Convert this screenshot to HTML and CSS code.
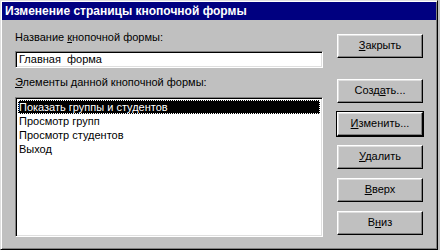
FILE: index.html
```html
<!DOCTYPE html>
<html lang="ru">
<head>
  <meta charset="UTF-8" />
  <title>Изменение страницы кнопочной формы</title>
  <link rel="stylesheet" href="styles.css">
</head>
<body>

  <div class="window">
    <div class="title-bar">Изменение страницы кнопочной формы</div>

    <div class="content">
      <div class="left">
        <div class="label">Название <u>к</u>нопочной формы:</div>
        <div class="textbox">Главная&nbsp; форма</div>

        <div class="label list-label"><u>Э</u>лементы данной кнопочной формы:</div>
        <div class="listbox">
          <div class="item selected">Показать группы и студентов</div>
          <div class="item">Просмотр групп</div>
          <div class="item">Просмотр студентов</div>
          <div class="item">Выход</div>
        </div>
      </div>

      <div class="buttons">
        <div class="btn close"><u>З</u>акрыть</div>
        <div class="btn create">Созд<u>а</u>ть...</div>
        <div class="btn default"><u>И</u>зменить...</div>
        <div class="btn"><u>У</u>далить</div>
        <div class="btn"><u>В</u>верх</div>
        <div class="btn">В<u>н</u>из</div>
      </div>
    </div>
  </div>

</body>
</html>
```

FILE: styles.css
```css
* {
  box-sizing: border-box;
  margin: 0;
  font-family: 'Liberation Sans', Arial, sans-serif;
}

body {
  background-color: #c0c0c0;
  width: 440px;
  height: 250px;
  overflow: hidden;
}

.window {
  width: 438px;
  height: 250px;
  background-color: #c0c0c0;
  border: 1px solid;
  border-color: #dfdfdf #000 #000 #dfdfdf;
  box-shadow: inset 1px 1px #fff, inset -1px -1px #808080;
  padding: 1px;
  display: flex;
  flex-direction: column;
}

.title-bar {
  height: 18px;
  background-color: #000080;
  color: #fff;
  font-weight: bold;
  font-size: 12px;
  line-height: 18px;
  padding-left: 3px;
  white-space: nowrap;
}

.content {
  display: flex;
  padding: 11px 0 0 13px;
}

.left {
  width: 308px;
  display: flex;
  flex-direction: column;
}

.label {
  font-size: 11px;
  line-height: 13px;
  color: #000;
  white-space: nowrap;
}

.textbox {
  margin-top: 7px;
  height: 17px;
  background: #fff;
  border: 1px solid;
  border-color: #808080 #fff #fff #808080;
  box-shadow: inset 1px 1px #000, inset -1px -1px #dfdfdf;
  font-size: 11px;
  line-height: 15px;
  padding-left: 3px;
}

.list-label {
  margin-top: 8px;
}

.listbox {
  margin-top: 8px;
  height: 140px;
  background: #fff;
  border: 1px solid;
  border-color: #808080 #fff #fff #808080;
  box-shadow: inset 1px 1px #000, inset -1px -1px #dfdfdf;
  padding: 2px;
}

.item {
  font-size: 11px;
  height: 14px;
  line-height: 14px;
  padding-left: 1px;
  white-space: nowrap;
}

.item.selected {
  background: #000;
  color: #fff;
  outline: 1px dotted #fff;
  outline-offset: -1px;
}

.buttons {
  width: 86px;
  margin-left: 14px;
  display: flex;
  flex-direction: column;
  gap: 9px;
  padding-top: 3px;
}

.btn {
  height: 24px;
  font-size: 11px;
  line-height: 20px;
  text-align: center;
  background: #c0c0c0;
  border: 1px solid;
  border-color: #fff #000 #000 #fff;
  box-shadow: inset -1px -1px #808080, inset 1px 1px #dfdfdf;
}

.btn.create {
  margin-top: 12px;
}

.btn.default {
  outline: 1px solid #000;
  border-color: #fff #000 #000 #fff;
  box-shadow: inset -1px -1px #808080, inset 1px 1px #dfdfdf;
}
```
